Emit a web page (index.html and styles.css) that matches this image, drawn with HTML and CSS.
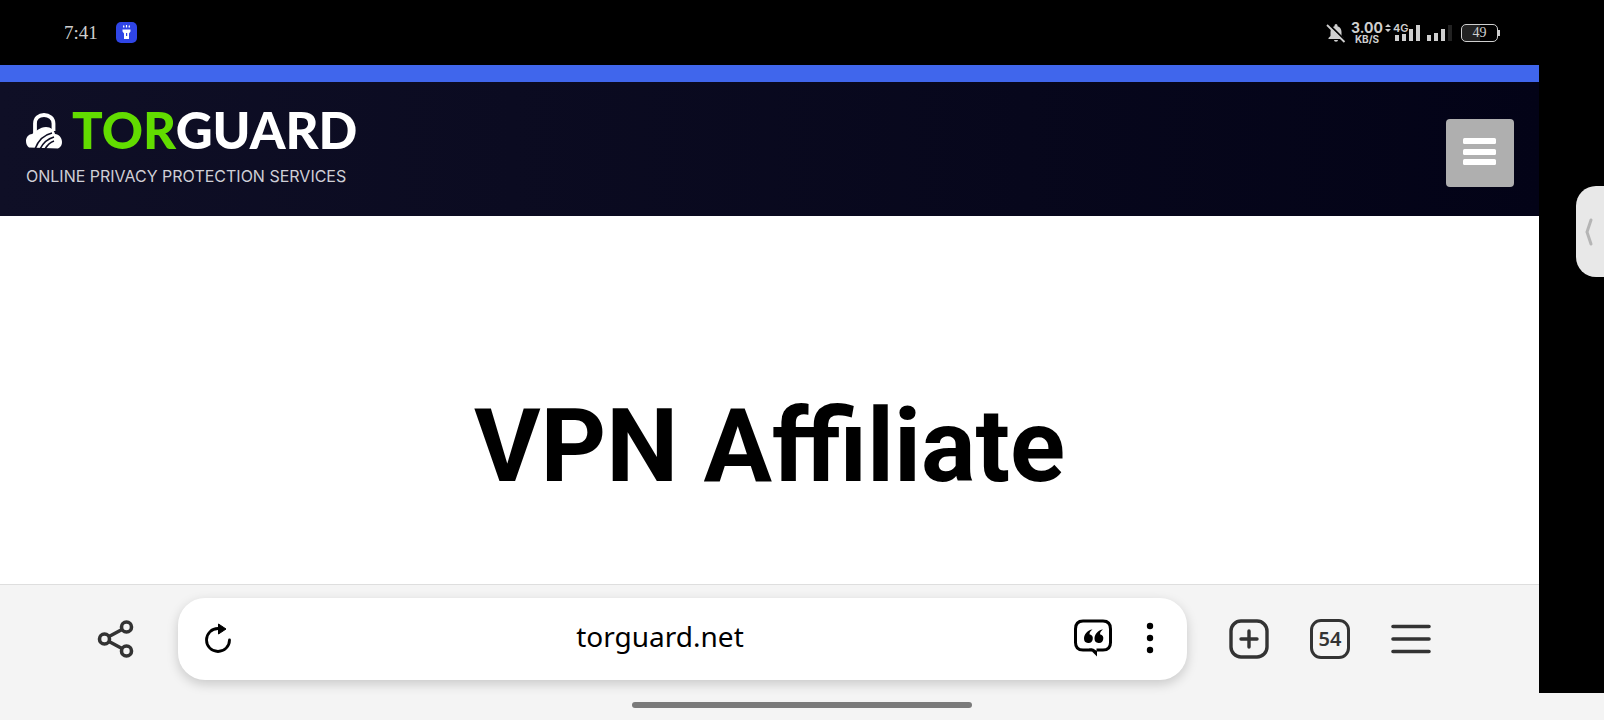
FILE: index.html
```html
<!DOCTYPE html>
<html lang="en">
<head>
    <meta charset="UTF-8">
    <meta name="viewport" content="width=device-width, initial-scale=1.0">
    <title>VPN Affiliate - TorGuard</title>
    <link rel="stylesheet" href="styles.css">
</head>
<body>
    <div class="screen">
        <div class="window">
            <!-- Status bar -->
            <div class="status">
                <div class="status-left">
                    <span class="time">7:41</span>
                    <svg class="torch" viewBox="0 0 21 21" width="21" height="21">
                        <rect width="21" height="21" rx="5" fill="#2f45e6"/>
                        <path d="M7.500 3.500l.5 2M10.500 3v2.500M13.500 3.500l-.5 2" stroke="#fff" stroke-width="1.200"/>
                        <path d="M6.500 7.500h8v2l-1.500 2v5.500h-5v-5.500l-1.500-2z" fill="#fff"/>
                        <rect x="10" y="11" width="1.200" height="3" fill="#2f45e6"/>
                    </svg>
                </div>
                <div class="status-right">
                    <svg class="bell" viewBox="0 0 20 20" width="20" height="20">
                        <path d="M2.500 16v-1l2-2V9C4.500 6 6 4 8.500 3.300V2.500a1.500 1.500 0 0 1 3 0v.8C14 4 15.500 6 15.500 9v4l2 2v1z" fill="#cfcfcf"/>
                        <path d="M8 17h4a2 1.800 0 0 1-4 0z" fill="#cfcfcf"/>
                        <path d="M2.500 1L20 18.500" stroke="#000" stroke-width="2"/>
                        <path d="M1 2l17.500 17" stroke="#cfcfcf" stroke-width="1.800"/>
                    </svg>
                    <div class="speed">
                        <span class="rate">3.00</span>
                        <span class="unit">KB/S</span>
                    </div>
                    <div class="mobile">
                        <svg viewBox="0 0 36 20" width="36" height="20">
                            <path d="M0 4L3 1l3 3zM0 6l3 3 3-3z" fill="#cfcfcf"/>
                            <path d="M12 12v6M19 11v7M26 6v12M33 2v16" stroke="#cfcfcf" stroke-width="4"/>
                        </svg>
                        <span class="network">4G</span>
                    </div>
                    <svg viewBox="0 0 25 20" width="25" height="20">
                        <path d="M2 12v6M9 10v8M16 6v12" stroke="#cfcfcf" stroke-width="4"/>
                        <path d="M23 2v16" stroke="#222" stroke-width="4"/>
                    </svg>
                    <div class="battery"><span>49</span></div>
                </div>
            </div>

            <!-- Site -->
            <div class="site">
                <div class="strip"></div>
                <header class="header">
                    <a href="#" class="brand">
                        <span class="logo">
                            <svg viewBox="0 0 36 36" width="36" height="36">
                                <path d="M9 24V10.500C9 5 13 2 18 2S27.500 5 27.500 10.500V18" fill="none" stroke="#fff" stroke-width="3.800"/>
                                <path d="M3 34.500C1 33 0 31 0 28c0-4 3-7 6-7 3-2 8-7 14-7 5 0 8 3 9 7 4 0 7 4 7 8 0 3-1 5-4 6.500z" fill="#fff"/>
                                <path d="M9 36c3-8 8-14 17-16M14 36c3-6 7-10 14-12M19 36c3-5 6-7 9-8" fill="none" stroke="#0e0e24" stroke-width="1.600"/>
                            </svg>
                            <span class="word"><span class="tor">TOR</span>GUARD</span>
                        </span>
                        <span class="tagline">ONLINE PRIVACY PROTECTION SERVICES</span>
                    </a>
                    <button type="button" class="menu" aria-label="Menu">
                        <svg viewBox="0 0 34 28" width="34" height="28">
                            <rect x="0" y="0" width="33" height="6" rx="1.500" fill="#fff"/>
                            <rect x="0" y="11" width="33" height="6" rx="1.500" fill="#fff"/>
                            <rect x="0" y="21" width="33" height="6" rx="1.500" fill="#fff"/>
                        </svg>
                    </button>
                </header>
                <main class="content">
                    <h1>VPN Affiliate</h1>
                </main>
            </div>

            <!-- Browser toolbar -->
            <div class="toolbar">
                <button type="button" aria-label="Share">
                    <svg viewBox="0 0 40 40" width="40" height="40" fill="none" stroke="#333" stroke-width="3.600">
                        <circle cx="8.500" cy="20" r="5"/>
                        <circle cx="30.500" cy="8" r="5"/>
                        <circle cx="30.500" cy="32" r="5"/>
                        <path d="M13 17.500L26 10.500M13 22.500L26 29.500"/>
                    </svg>
                </button>
                <div class="address">
                    <button type="button" aria-label="Reload">
                        <svg viewBox="0 0 30 32" width="30" height="32">
                            <path d="M15 6.500A11.500 11.500 0 1 0 26.500 18" fill="none" stroke="#000" stroke-width="2.800" stroke-linecap="round"/>
                            <path d="M15.500 2l7.500 5-7.500 5z" fill="#000" stroke="#000" stroke-linejoin="round"/>
                        </svg>
                    </button>
                    <input type="text" class="url" aria-label="Address" value="torguard.net">
                    <button type="button" aria-label="Reader view">
                        <svg viewBox="0 0 40 40" width="40" height="40">
                            <path d="M19 32H10c-5 0-7.500-2.500-7.500-7.500V11C2.500 5.500 5 3 10 3h20C35 3 37.500 5.500 37.500 11v13.500c0 5-2.500 7.500-7.500 7.500h-6.500" fill="none" stroke="#000" stroke-width="3"/>
                            <path d="M16 30.500h4l4 2.500V38.500z" fill="#000"/>
                            <path d="M19.500 11.500c-5 .5-8.500 5-8.500 9a4.400 4.400 0 1 0 5.500-4.200c0-2 1.200-3.600 3-4.800zM30 11.500c-5 .5-8.500 5-8.500 9a4.400 4.400 0 1 0 5.500-4.200c0-2 1.200-3.600 3-4.800z" fill="#000"/>
                        </svg>
                    </button>
                    <button type="button" aria-label="Page options">
                        <svg viewBox="0 0 8 32" width="8" height="32">
                            <circle cx="4" cy="4" r="3.200"/>
                            <circle cx="4" cy="16" r="3.200"/>
                            <circle cx="4" cy="28" r="3.200"/>
                        </svg>
                    </button>
                </div>
                <div class="actions">
                    <button type="button" aria-label="New tab">
                        <svg viewBox="0 0 40 40" width="40" height="40" fill="none" stroke="#333" stroke-width="3.400" stroke-linecap="round">
                            <rect x="2" y="2" width="36" height="36" rx="10"/>
                            <path d="M12 20h16M20 12v16"/>
                        </svg>
                    </button>
                    <button type="button" class="tabs" aria-label="54 open tabs">54</button>
                    <button type="button" aria-label="Browser menu">
                        <svg viewBox="0 0 40 32" width="40" height="32" stroke="#333" stroke-width="3.600" stroke-linecap="round">
                            <path d="M2 3.500h36M2 16h36M2 28.500h36"/>
                        </svg>
                    </button>
                </div>
            </div>
        </div>

        <button type="button" class="edge" aria-label="Open side panel">
            <svg viewBox="0 0 8 28" width="8" height="28">
                <path d="M6 2L2 14l4 12" fill="none" stroke="#b5b5b5" stroke-width="3" stroke-linecap="round"/>
            </svg>
        </button>
    </div>
    <div class="gesture"><span></span></div>
</body>
</html>
```
FILE: styles.css
```css
* {
    box-sizing: border-box;
}

body {
    margin: 0;
    min-height: 100vh;
    display: flex;
    flex-direction: column;
    background-color: #f4f4f4;
    font-family: Roboto, sans-serif;
}

button {
    padding: 0;
    border: none;
    background: none;
    cursor: pointer;
}

svg {
    display: block;
    flex-shrink: 0;
}

.screen {
    flex: 1;
    display: flex;
    justify-content: space-between;
    background-color: #000;
}

.window {
    flex: 1;
    margin-right: 37px;
    display: flex;
    flex-direction: column;
}

/* Status bar */
.status {
    height: 65px;
    padding: 0 41px 0 64px;
    display: flex;
    align-items: center;
    justify-content: space-between;
    color: #cfcfcf;
}

.status-left {
    display: flex;
    align-items: center;
    gap: 18px;
}

.time {
    font-family: "Liberation Serif", serif;
    font-size: 19px;
}

.status-right {
    display: flex;
    align-items: center;
    gap: 6px;
    font-family: Inter, sans-serif;
}

.speed {
    width: 30px;
    margin-right: -3px;
    display: flex;
    flex-direction: column;
    align-items: center;
    font-weight: 700;
}

.rate {
    font-size: 14px;
    line-height: 12px;
}

.unit {
    font-size: 10px;
    line-height: 10px;
}

.mobile {
    position: relative;
}

.network {
    position: absolute;
    top: 0;
    left: 8px;
    font-size: 11px;
    line-height: 11px;
    font-weight: 600;
}

.battery {
    position: relative;
    width: 37px;
    height: 18px;
    margin-left: 3px;
    border: 1px solid #cfcfcf;
    border-radius: 5px;
    background: linear-gradient(to right, #222 50%, #000 50%);
    font-family: "Liberation Serif", serif;
    font-size: 14px;
    line-height: 16px;
    text-align: center;
}

.battery::after {
    content: "";
    position: absolute;
    top: 5px;
    right: -3px;
    width: 2px;
    height: 6px;
    background-color: #cfcfcf;
}

/* Site */
.site {
    flex: 1;
    display: flex;
    flex-direction: column;
    background-color: #fff;
}

.strip {
    height: 17px;
    background-color: #4066ec;
}

.header {
    height: 134px;
    padding: 0 25px 0 26px;
    display: flex;
    align-items: center;
    justify-content: space-between;
    background: linear-gradient(to right, #0f0f26, #030317);
}

.brand {
    margin-top: 2px;
    display: flex;
    flex-direction: column;
    gap: 15px;
    color: #fff;
    text-decoration: none;
    font-family: Inter, sans-serif;
}

.logo {
    display: flex;
    align-items: center;
    gap: 10px;
}

.word {
    font-family: Lato, sans-serif;
    font-size: 51px;
    line-height: 34px;
    padding-bottom: 2px;
    font-weight: 900;
}

.tor {
    color: #62dc00;
}

.tagline {
    color: #cfcfd6;
    font-size: 16px;
    line-height: 24px;
}

.menu {
    width: 68px;
    height: 68px;
    margin-top: 8px;
    padding-bottom: 2px;
    border-radius: 4px;
    background-color: #afafaf;
    display: flex;
    align-items: center;
    justify-content: center;
}

.content {
    flex: 1;
    display: flex;
    align-items: center;
    justify-content: center;
    padding-top: 92px;
}

h1 {
    margin: 0;
    font-size: 102px;
    line-height: 120px;
    font-weight: 700;
    color: #000;
}

/* Browser toolbar */
.toolbar {
    height: 109px;
    padding: 0 108px 0 96px;
    border-top: 1px solid #dedede;
    background-color: #f4f4f4;
    display: flex;
    align-items: center;
    gap: 42px;
}

.address {
    flex: 1;
    height: 82px;
    padding: 0 33px 2px 25px;
    border-radius: 27px;
    background-color: #fff;
    box-shadow: 0 4px 12px rgba(0, 0, 0, 0.18);
    display: flex;
    align-items: center;
    gap: 33px;
}

.url {
    flex: 1;
    min-width: 0;
    padding: 0 0 4px 14px;
    border: none;
    outline: none;
    background: none;
    font-family: "Noto Sans", sans-serif;
    font-size: 28px;
    text-align: center;
    color: #000;
}

.actions {
    display: flex;
    align-items: center;
    gap: 41px;
}

.tabs {
    width: 40px;
    height: 40px;
    border: 3px solid #333;
    border-radius: 11px;
    color: #333;
    font-family: "Noto Sans", sans-serif;
    font-size: 20px;
    line-height: 34px;
    font-weight: 600;
}

/* Side panel handle */
.edge {
    width: 28px;
    height: 91px;
    margin-top: 186px;
    border-radius: 20px 0 0 20px;
    background-color: #e8e8e8;
    display: flex;
    align-items: center;
    padding-left: 9px;
}

.gesture {
    height: 27px;
    display: flex;
    align-items: center;
    justify-content: center;
    padding-bottom: 3px;
}

.gesture span {
    width: 340px;
    height: 6px;
    border-radius: 3px;
    background-color: #7a7a7a;
}
```
